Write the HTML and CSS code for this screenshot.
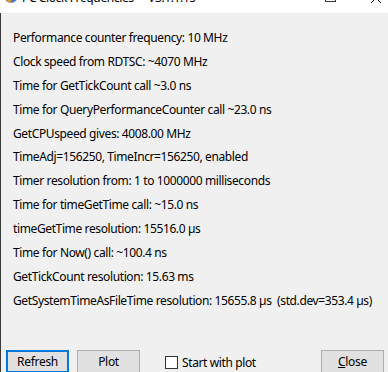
FILE: index.html
```html
<!DOCTYPE html>
<html>
<head>
<meta charset="utf-8">
<link rel="stylesheet" href="styles.css">
</head>
<body>
<div class="window">
  <div class="titlebar">
    <span class="app-icon">
      <svg width="16" height="16" viewBox="0 0 16 16">
        <circle cx="8" cy="8" r="7" fill="#8a8a8a"/>
        <path d="M2 9 A6 6 0 0 0 8 14 L8 9 Z" fill="#e0a020"/>
        <path d="M8 9 L8 14 A6 6 0 0 0 14 9 Z" fill="#3a7bd5"/>
        <path d="M3 10 L6 10" stroke="#c03030" stroke-width="1"/>
      </svg>
    </span>
    <span class="title">PC Clock Frequencies  -  V3.1.1.15</span>
    <span class="caption-btns">
      <span class="cap-max"></span>
      <span class="cap-close">
        <svg width="12" height="12" viewBox="0 0 12 12"><path d="M1 1 L11 11 M11 1 L1 11" stroke="#111" stroke-width="1"/></svg>
      </span>
    </span>
  </div>
  <div class="client">
    <div class="lines">
      <div class="line">Performance counter frequency: 10 MHz</div>
      <div class="line">Clock speed from RDTSC: ~4070 MHz</div>
      <div class="line">Time for GetTickCount call ~3.0 ns</div>
      <div class="line">Time for QueryPerformanceCounter call ~23.0 ns</div>
      <div class="line">GetCPUspeed gives: 4008.00 MHz</div>
      <div class="line">TimeAdj=156250, TimeIncr=156250, enabled</div>
      <div class="line">Timer resolution from: 1 to 1000000 milliseconds</div>
      <div class="line">Time for timeGetTime call: ~15.0 ns</div>
      <div class="line">timeGetTime resolution: 15516.0 µs</div>
      <div class="line">Time for Now() call: ~100.4 ns</div>
      <div class="line">GetTickCount resolution: 15.63 ms</div>
      <div class="line">GetSystemTimeAsFileTime resolution: 15655.8 µs&nbsp; (std.dev=353.4 µs)</div>
    </div>
    <div class="buttons">
      <button class="btn default">Refresh</button>
      <button class="btn">Plot</button>
      <label class="check"><span class="box"></span>Start with plot</label>
      <button class="btn close"><u>C</u>lose</button>
    </div>
  </div>
</div>
</body>
</html>
```
FILE: styles.css
```css
html, body {
  margin: 0;
  padding: 0;
  width: 388px;
  height: 372px;
  overflow: hidden;
  background: #f0f0f0;
}
.window {
  width: 388px;
  height: 372px;
  display: flex;
  flex-direction: column;
  font-family: "Noto Sans", "Open Sans", sans-serif;
  font-size: 12px;
  letter-spacing: -0.38px;
  color: #000;
}
.titlebar {
  height: 13px;
  background: #fff;
  display: flex;
  overflow: hidden;
}
.app-icon {
  margin-left: 3px;
  height: 16px;
  width: 16px;
  transform: translateY(-12px);
}
.title {
  margin-left: 3px;
  transform: translateY(-10px);
  line-height: 16px;
  white-space: pre;
}
.caption-btns {
  margin-left: auto;
  display: flex;
  transform: translateY(-9px);
}
.cap-max {
  width: 9px;
  height: 9px;
  border: 1px solid #333;
  margin-right: 34px;
}
.cap-close {
  width: 12px;
  height: 12px;
  margin-right: 6px;
}
.client {
  flex: 1;
  border-left: 1px solid #3a3a3a;
  display: flex;
  flex-direction: column;
}
.lines {
  padding: 15px 0 0 12px;
  display: flex;
  flex-direction: column;
}
.line {
  height: 23.9px;
  line-height: 20px;
  white-space: pre;
}
.buttons {
  margin-top: auto;
  display: flex;
  align-items: flex-start;
  padding: 0 0 0 5px;
  height: 22px;
}
.btn {
  box-sizing: border-box;
  width: 63px;
  height: 23px;
  background: #e1e1e1;
  border: 1px solid #adadad;
  font-family: inherit;
  font-size: 12px;
  letter-spacing: -0.3px;
  padding: 0;
  margin: 0 8px 0 0;
  color: #000;
  line-height: 20px;
}
.btn.default {
  border: 2px solid #0078d7;
}
.check {
  display: flex;
  align-items: center;
  margin-left: 17px;
  height: 20px;
  margin-top: 2px;
}
.box {
  width: 11px;
  height: 11px;
  border: 1px solid #333;
  background: #fff;
  margin-right: 4px;
}
.btn.close {
  margin-left: auto;
  margin-right: 4px;
}
```
